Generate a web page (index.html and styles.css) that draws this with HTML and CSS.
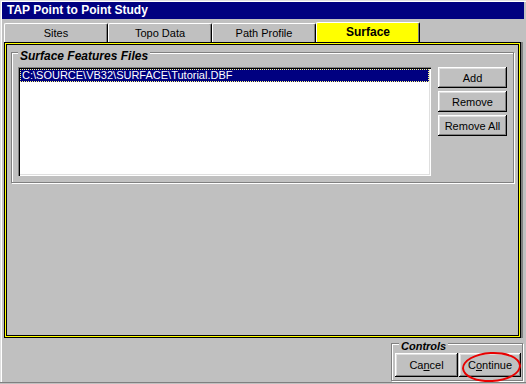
FILE: index.html
```html
<!DOCTYPE html>
<html>
<head>
<meta charset="utf-8">
<link rel="stylesheet" href="styles.css">
</head>
<body>
<div class="window">
  <div class="titlebar">TAP Point to Point Study</div>
  <div class="tabs">
    <div class="tab">Sites</div>
    <div class="tab">Topo Data</div>
    <div class="tab">Path Profile</div>
    <div class="tab tab-active">Surface</div>
  </div>
  <div class="panel">
    <div class="group group-files">
      <span class="group-label">Surface Features Files</span>
      <div class="listbox">
        <div class="list-item selected">C:\SOURCE\VB32\SURFACE\Tutorial.DBF</div>
      </div>
      <div class="btn-col">
        <button class="btn btn-side">Add</button>
        <button class="btn btn-side">Remove</button>
        <button class="btn btn-side">Remove All</button>
      </div>
    </div>
  </div>
  <div class="footer">
    <div class="group group-controls">
      <span class="group-label">Controls</span>
      <button class="btn btn-cancel">Ca<u>n</u>cel</button>
      <button class="btn btn-continue">C<u>o</u>ntinue<span class="circle"></span></button>
    </div>
  </div>
</div>
</body>
</html>
```

FILE: styles.css
```css
html, body {
  margin: 0;
  padding: 0;
  background: #c0c0c0;
}

body {
  font-family: "Liberation Sans", Arial, sans-serif;
  font-size: 11px;
  color: #000;
}

.window {
  width: 526px;
  height: 384px;
  box-sizing: border-box;
  padding: 2px 2px 2px 2px;
  background: #c0c0c0;
  display: flex;
  flex-direction: column;
  box-shadow: inset 0 -1px #c0c0c0, inset 0 -2px #808080, inset 1px 1px #dfdfdf, inset 2px 2px #fff;
}

.titlebar {
  height: 17px;
  background: #000080;
  color: #fff;
  font-weight: bold;
  font-size: 12px;
  line-height: 17px;
  padding-left: 5px;
  white-space: nowrap;
}

.tabs {
  margin: 3px 0 0 2px;
  height: 20px;
  display: flex;
  align-items: flex-end;
}

.tab {
  width: 104px;
  height: 19px;
  box-sizing: border-box;
  border-top: 1px solid #fff;
  border-left: 1px solid #fff;
  border-right: 1px solid #000;
  border-radius: 2px 2px 0 0;
  box-shadow: inset -1px 0 #808080;
  text-align: center;
  line-height: 18px;
  font-size: 11px;
  background: #c0c0c0;
}

.tab-active {
  height: 20px;
  background: #ffff00;
  font-weight: bold;
  font-size: 12px;
  line-height: 19px;
}

.panel {
  margin-left: 2px;
  width: 517px;
  height: 296px;
  box-sizing: border-box;
  padding: 10px 0 0 7px;
  box-shadow: inset 0 0 0 1px #000, inset 0 0 0 2px #ff0, inset 0 0 0 3px #000, 2px 0 0 #808080;
}

.group {
  position: relative;
  box-sizing: border-box;
  border: 1px solid #808080;
  box-shadow: inset 1px 1px #fff, 1px 1px #fff;
}

.group-label {
  position: absolute;
  top: -4px;
  padding: 0 2px;
  background: #c0c0c0;
  font-weight: bold;
  font-style: italic;
  white-space: nowrap;
}

.group-files {
  width: 503px;
  height: 131px;
  padding: 14px 6px 6px 6px;
  display: flex;
  gap: 7px;
}

.group-files .group-label {
  left: 6px;
  font-size: 12px;
  line-height: 14px;
}

.listbox {
  width: 413px;
  height: 109px;
  box-sizing: border-box;
  padding: 2px;
  background: #fff;
  box-shadow: inset 1px 1px #808080, inset 2px 2px #000, inset -1px -1px #fff, inset -2px -2px #dfdfdf;
}

.list-item {
  height: 13px;
  box-sizing: border-box;
  padding-left: 1px;
  font-size: 11px;
  line-height: 11px;
  white-space: nowrap;
}

.list-item.selected {
  background: #000080;
  color: #fff;
  border: 1px dotted #ffff80;
}

.btn-col {
  display: flex;
  flex-direction: column;
  gap: 3px;
}

.btn {
  font-family: "Liberation Sans", Arial, sans-serif;
  font-size: 11px;
  color: #000;
  background: #c0c0c0;
  border: none;
  padding: 0;
  margin: 0;
  overflow: visible;
  box-shadow: inset -1px -1px #000, inset 1px 1px #fff, inset -2px -2px #808080, inset 2px 2px #dfdfdf;
}

.btn-side {
  width: 69px;
  height: 21px;
}

.footer {
  flex: 1;
  display: flex;
  justify-content: flex-end;
  align-items: flex-start;
}

.group-controls {
  margin-top: 5px;
  margin-right: 1px;
  width: 132px;
  height: 38px;
  padding: 9px 1px 3px 3px;
  display: flex;
  gap: 1px;
}

.group-controls .group-label {
  left: 7px;
  font-size: 11px;
  line-height: 13px;
}

.btn-cancel {
  width: 63px;
  height: 24px;
}

.btn-continue {
  position: relative;
  width: 62px;
  height: 24px;
}

.circle {
  position: absolute;
  left: 3px;
  top: -1px;
  width: 59px;
  height: 30px;
  box-sizing: border-box;
  border: 2px solid #e80000;
  border-radius: 50%;
  transform: rotate(-3deg);
}
```
